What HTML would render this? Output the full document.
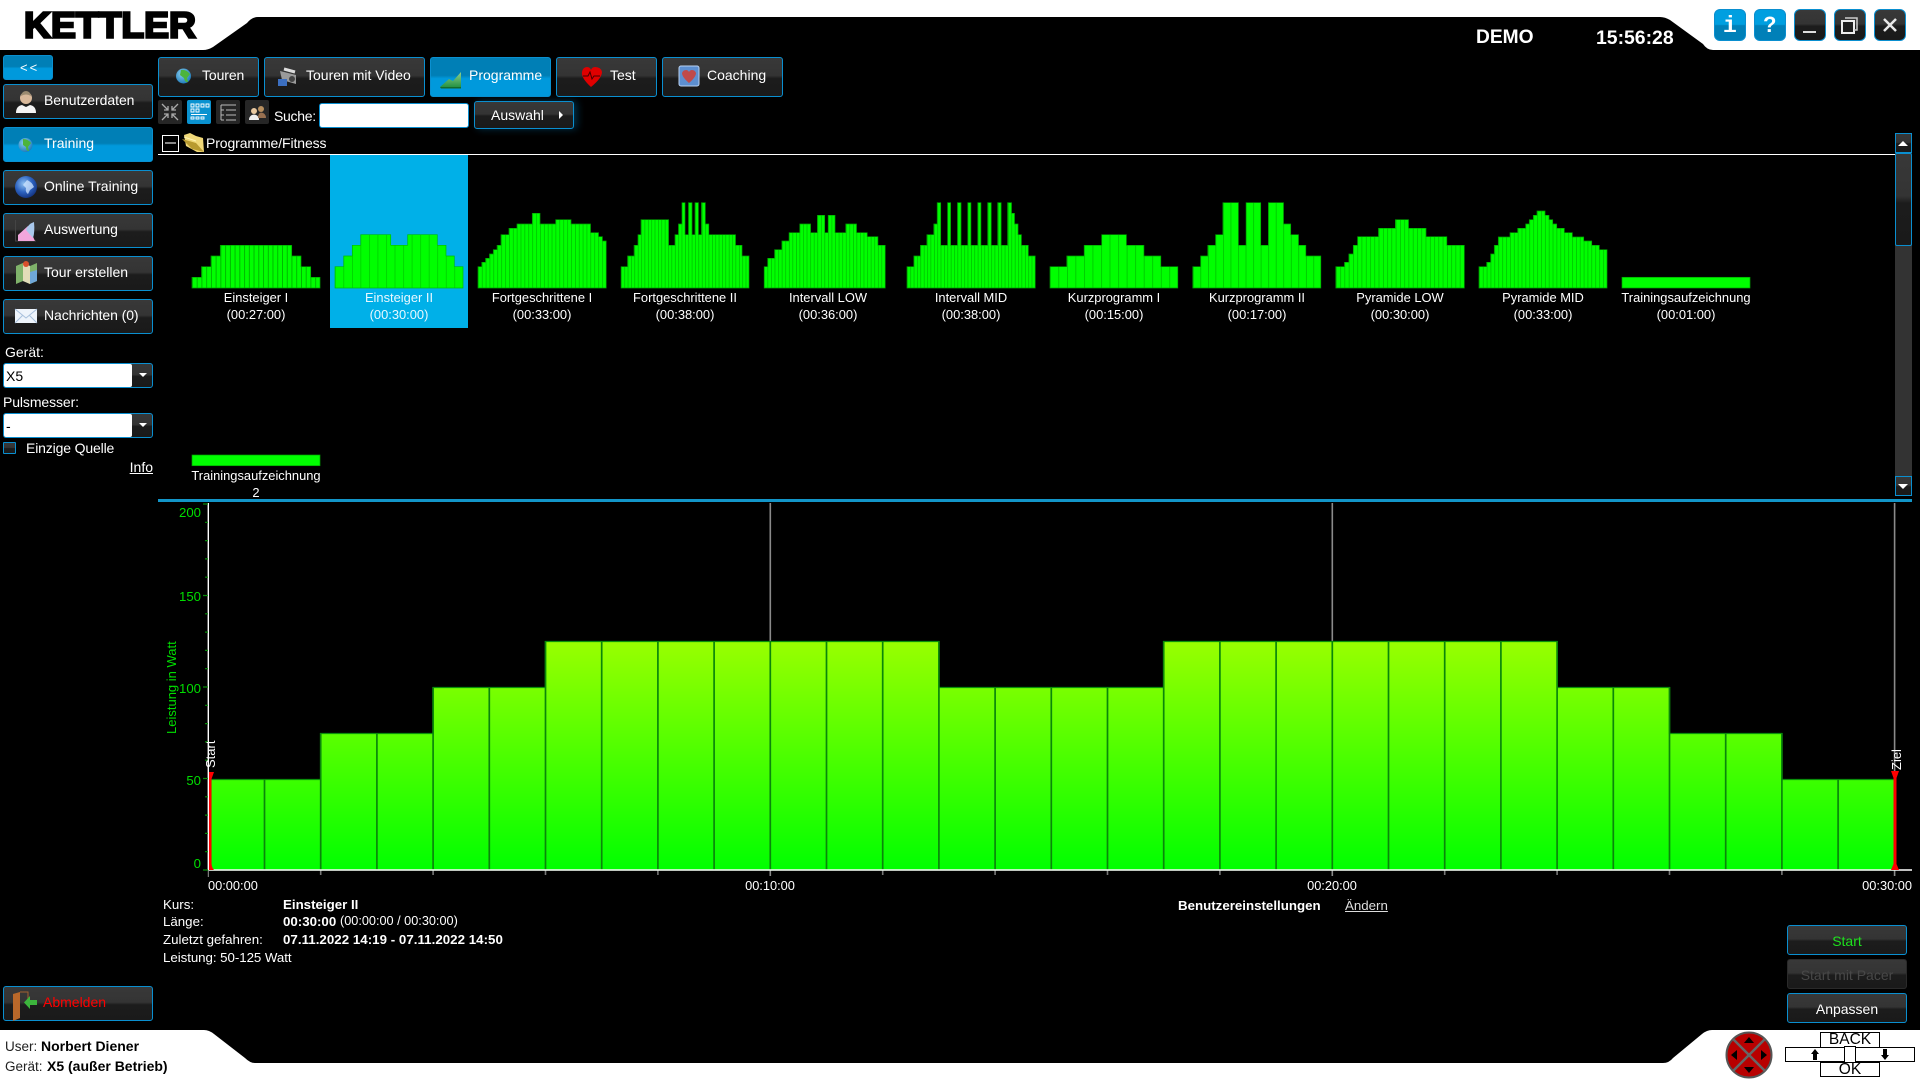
<!DOCTYPE html>
<html lang="de"><head><meta charset="utf-8"><title>Kettler</title>
<style>
html,body{margin:0;padding:0;width:1920px;height:1080px;overflow:hidden;background:#fff;font-family:"Liberation Sans",sans-serif;color:#fff}
svg.l{position:absolute;left:0;top:0;width:1920px;height:1080px}
svg text{font-family:"Liberation Sans",sans-serif}
.b{position:absolute;box-sizing:border-box;border:1px solid #0a8fd0;border-radius:3px;background:linear-gradient(#383838 0,#343434 46%,#1c1c1c 54%,#1a1a1a 100%)}
.a{background:linear-gradient(#007fb6 0,#007fb6 46%,#0099dc 54%,#0099dc 100%);border-color:#0a90d0}
.w{border-radius:6px}
.i{background:linear-gradient(#009fe0 0,#009fe0 48%,#0080b8 52%,#0080b8 100%)}
.t{position:absolute;white-space:nowrap;font-size:14px;line-height:17px}
.s{font-size:13.3px}
.k{color:#000}
.box{position:absolute;box-sizing:border-box;background:#fff;border:1.5px solid #000}
</style></head><body>
<svg class="l" viewBox="0 0 1920 1080">
<defs>
<linearGradient id="g" gradientUnits="userSpaceOnUse" x1="0" y1="870" x2="0" y2="641"><stop offset="0" stop-color="#00ff00"/><stop offset="1" stop-color="#99ff00"/></linearGradient>
<pattern id="p1" x="192" width="4.74" height="10" patternUnits="userSpaceOnUse"><rect width="5" height="10" fill="#0f0"/><rect width=".8" height="10" fill="#00a800"/></pattern>
<pattern id="p2" x="335" width="8.53" height="10" patternUnits="userSpaceOnUse"><rect width="9" height="10" fill="#0f0"/><rect width=".6" height="10" fill="#00c000"/></pattern>
<pattern id="p3" x="478" width="3.88" height="10" patternUnits="userSpaceOnUse"><rect width="4" height="10" fill="#0f0"/><rect width=".6" height="10" fill="#00b000"/></pattern>
<pattern id="p4" x="621" width="3.37" height="10" patternUnits="userSpaceOnUse"><rect width="4" height="10" fill="#0f0"/><rect width=".6" height="10" fill="#00b000"/></pattern>
<pattern id="p5" x="764" width="3.56" height="10" patternUnits="userSpaceOnUse"><rect width="4" height="10" fill="#0f0"/><rect width=".6" height="10" fill="#00b000"/></pattern>
<pattern id="p6" x="907" width="3.37" height="10" patternUnits="userSpaceOnUse"><rect width="4" height="10" fill="#0f0"/><rect width=".6" height="10" fill="#00b000"/></pattern>
<pattern id="p7" x="1050" width="8.53" height="10" patternUnits="userSpaceOnUse"><rect width="9" height="10" fill="#0f0"/><rect width=".6" height="10" fill="#00b000"/></pattern>
<pattern id="p8" x="1193" width="7.53" height="10" patternUnits="userSpaceOnUse"><rect width="8" height="10" fill="#0f0"/><rect width=".6" height="10" fill="#00b000"/></pattern>
<pattern id="p9" x="1336" width="4.27" height="10" patternUnits="userSpaceOnUse"><rect width="5" height="10" fill="#0f0"/><rect width=".6" height="10" fill="#00b000"/></pattern>
<pattern id="p10" x="1479" width="3.88" height="10" patternUnits="userSpaceOnUse"><rect width="4" height="10" fill="#0f0"/><rect width=".6" height="10" fill="#00b000"/></pattern>
<radialGradient id="gl" cx=".4" cy=".35" r=".7"><stop offset="0" stop-color="#8fc0f0"/><stop offset=".55" stop-color="#2c62c0"/><stop offset="1" stop-color="#12307c"/></radialGradient>
<radialGradient id="gs" cx=".4" cy=".35" r=".7"><stop offset="0" stop-color="#8cd0f0"/><stop offset="1" stop-color="#1a78b8"/></radialGradient>
<linearGradient id="gp" x1="0" y1="0" x2="0" y2="1"><stop offset="0" stop-color="#8fd08f"/><stop offset="1" stop-color="#1f8f3f"/></linearGradient>
</defs>
<path fill="#000" d="M0 50H203Q208 50 213 47L247 23Q252 17 258 17H1660Q1665 17 1670 20L1703 44Q1707 50 1713 50H1920V1030H1712Q1707 1030 1702 1034L1673 1058Q1669 1063 1663 1063H255Q250 1063 245 1058L214 1034Q209 1030 204 1030H0Z"/>
<!-- selected -->
<rect x="330" y="155" width="138" height="173" fill="#00b0e8"/>
<!-- tree line -->
<rect x="158" y="154" width="1737" height="1" fill="#fff"/>
<!-- thumbnails -->
<g stroke="#00a000" stroke-width=".7">
<path fill="url(#p1)" d="M192 288V277.3H201.5V266.7H211V256H220.3V245.3H291.7V256H301V266.7H310.7V277.3H320V288Z"/>
<path fill="url(#p2)" stroke="#00c000" d="M335 288V266.7H343.7V256H352.3V245.3H360.7V234.7H390.7V245.3H407.7V234.7H437.3V245.3H446V256H454.3V266.7H463V288Z"/>
<path fill="url(#p3)" d="M478 288V266.7H481.8V262.3H485.6V258.3H489.5V254H493.3V249.7H497.1V245.3H501V234.7H509V228.3H517V224H532.3V213.3H540V224H555.7V219.7H571V224H590.5V232.7H598.5V236.7H602.4V241H606.2V288Z"/>
<path fill="url(#p4)" d="M621.1 288V266.7H627.6V256H634.1V245.3H638V234.7H641V219.7H668.6V245.3H675V234.7H678.5V224H682V202.7H685V234.7H688.5V202.7H692V234.7H695V202.7H698.4V234.7H701.5V202.7H705.3V224H708.8V234.7H735.5V245.3H742V256H749V288Z"/>
<path fill="url(#p5)" d="M764.2 288V266.7H767.7V258.3H774.6V249.7H781.9V241H789.1V232.7H799.8V224H810.6V232.7H817.4V215.3H824.7V232.7H828.2V215.3H835V232.7H845.8V224H856.5V232.7H867.2V236.7H877.9V245.3H885.2V288Z"/>
<path fill="url(#p6)" d="M907 288V266.7H913.9V256H920.4V245.3H926.9V234.7H933.8V224H937.2V202.7H940.7V245.3H947.6V202.7H950.6V245.3H957.5V202.7H961V245.3H967.8V202.7H970.9V245.3H977.8V202.7H980.9V245.3H987.7V202.7H991.2V245.3H997.7V202.7H1001.1V245.3H1007.6V202.7H1011.5V213.3H1014.5V224H1018V234.7H1021.4V245.3H1028.3V256H1035.2V288Z"/>
<path fill="url(#p7)" d="M1050 288V266.7H1066.8V256H1084.2V245.3H1101.7V234.7H1126.4V245.3H1143.9V256H1160.8V266.7H1177.8V288Z"/>
<path fill="url(#p8)" d="M1192.8 288V266.7H1200.6V256H1207.8V245.3H1215.6V234.7H1222.9V202.7H1238.4V245.3H1246.1V202.7H1260.7V245.3H1268.4V202.7H1283.5V224H1290.7V234.7H1298.5V245.3H1305.8V256H1320.8V288Z"/>
<path fill="url(#p9)" d="M1335.8 288V266.7H1344.5V262.3H1348.9V254H1353.3V245.3H1357.6V236.7H1378.5V228.3H1395.4V219.7H1408.5V228.3H1426V236.7H1446.8V245.3H1464.3V288Z"/>
<path fill="url(#p10)" d="M1479 288V266.7H1486.7V262.3H1490.7V254H1494.3V245.3H1498.3V237H1510V232.7H1517.7V228.3H1525.7V224H1529.3V219.7H1533.3V215.3H1537V211H1545V215.3H1549V219.7H1552.7V224H1556.7V228.3H1564.3V232.7H1572.3V237H1583.7V241H1591.7V245.3H1599.3V249.7H1607V288Z"/>
<rect x="1622" y="277.3" width="128" height="10.7" fill="#0f0"/>
<rect x="192" y="455" width="128" height="10.7" fill="#0f0"/>
</g>
<!-- thumbnail labels -->
<g font-size="12.9" fill="#fff" text-anchor="middle">
<text x="256" y="302">Einsteiger I</text><text x="256" y="319">(00:27:00)</text>
<text x="399" y="302" fill="#e8f8ff">Einsteiger II</text><text x="399" y="319" fill="#e8f8ff">(00:30:00)</text>
<text x="542" y="302">Fortgeschrittene I</text><text x="542" y="319">(00:33:00)</text>
<text x="685" y="302">Fortgeschrittene II</text><text x="685" y="319">(00:38:00)</text>
<text x="828" y="302">Intervall LOW</text><text x="828" y="319">(00:36:00)</text>
<text x="971" y="302">Intervall MID</text><text x="971" y="319">(00:38:00)</text>
<text x="1114" y="302">Kurzprogramm I</text><text x="1114" y="319">(00:15:00)</text>
<text x="1257" y="302">Kurzprogramm II</text><text x="1257" y="319">(00:17:00)</text>
<text x="1400" y="302">Pyramide LOW</text><text x="1400" y="319">(00:30:00)</text>
<text x="1543" y="302">Pyramide MID</text><text x="1543" y="319">(00:33:00)</text>
<text x="1686" y="302">Trainingsaufzeichnung</text><text x="1686" y="319">(00:01:00)</text>
<text x="256" y="480">Trainingsaufzeichnung</text><text x="256" y="497">2</text>
</g>
<!-- separator -->
<rect x="158" y="499" width="1754" height="3" fill="#1295c8"/>
<!-- chart grid -->
<g stroke="#8a8a8a" stroke-width="1.6">
<path d="M770.3 503V876M1332.3 503V876M1894.6 503V876"/>
<path stroke="#777" d="M320.7 870V875M433.1 870V875M545.5 870V875M657.9 870V875M882.7 870V875M995.1 870V875M1107.5 870V875M1219.9 870V875M1444.7 870V875M1557.1 870V875M1669.5 870V875M1781.9 870V875"/>
</g>
<path fill="url(#g)" stroke="#0a8f0a" stroke-width="1.2" d="M211 870V779.500H320.7V733.500H433.1V687.500H545.5V641.500H938.9V687.500H1163.7V641.500H1557.1V687.500H1669.5V733.500H1781.9V779.500H1894.3V870Z"/>
<g stroke="#0a860a" stroke-width="1.7">
<path d="M264.5 779V870M320.7 733V870M376.9 733V870M433.1 687V870M489.3 687V870M545.5 641V870M601.7 641V870M657.9 641V870M714.1 641V870M770.3 641V870M826.5 641V870M882.7 641V870M938.9 641V870M995.1 687V870M1051.3 687V870M1107.5 687V870M1163.7 641V870M1219.9 641V870M1276.1 641V870M1332.3 641V870M1388.5 641V870M1444.7 641V870M1500.9 641V870M1557.1 641V870M1613.3 687V870M1669.5 687V870M1725.7 733V870M1781.9 733V870M1838.1 779V870"/>
</g>
<!-- axes -->
<path stroke="#fff" stroke-width="1.4" fill="none" d="M208.3 503V870M208 870H1912"/>
<path stroke="#999" stroke-width="1" d="M208.3 870V877"/>
<path stroke="#0a8a0a" stroke-width="1.2" d="M205 851.7H208M205 833.4H208M205 815.1H208M205 796.8H208M203 778.5H208M205 760.2H208M205 741.9H208M205 723.6H208M205 705.3H208M203 687H208M205 668.7H208M205 650.4H208M205 632.1H208M205 613.8H208M203 595.5H208M205 577.2H208M205 558.9H208M205 540.6H208M205 522.3H208M203 504H208M203 870H208"/>
<!-- red markers -->
<path fill="#f00" d="M209 772H214L211.5 779V864Q212 868 214 870H209Z"/>
<path fill="#f00" d="M1891 771H1899L1896.5 778V864L1899 870H1891L1893.5 864V778Z"/>
<g font-size="13" fill="#fff">
<text transform="translate(215 768) rotate(-90)">Start</text>
<text transform="translate(1901 770) rotate(-90)">Ziel</text>
</g>
<g font-size="13.2" fill="#0d0" text-anchor="end">
<text x="201" y="517">200</text><text x="201" y="601">150</text><text x="201" y="693">100</text><text x="201" y="785">50</text><text x="201" y="868">0</text>
</g>
<text transform="translate(176 734) rotate(-90)" font-size="13" fill="#0d0">Leistung in Watt</text>
<g font-size="12.8" fill="#fff">
<text x="208" y="890">00:00:00</text>
<text x="770" y="890" text-anchor="middle">00:10:00</text>
<text x="1332" y="890" text-anchor="middle">00:20:00</text>
<text x="1912" y="890" text-anchor="end">00:30:00</text>
</g>
<!-- logo -->
<text x="24" y="37.500" font-size="36.5" font-weight="700" fill="#000" stroke="#000" stroke-width="2.4" textLength="172" lengthAdjust="spacingAndGlyphs">KETTLER</text>
</svg>

<!-- sidebar -->
<div class="b a" style="left:3px;top:55px;width:50px;height:25px;border-radius:3px"></div>
<div class="b" style="left:3px;top:84px;width:150px;height:35px"></div>
<div class="b a" style="left:3px;top:127px;width:150px;height:35px"></div>
<div class="b" style="left:3px;top:170px;width:150px;height:35px"></div>
<div class="b" style="left:3px;top:213px;width:150px;height:35px"></div>
<div class="b" style="left:3px;top:256px;width:150px;height:35px"></div>
<div class="b" style="left:3px;top:299px;width:150px;height:35px"></div>
<div class="t" style="left:20px;top:59px;letter-spacing:2px;font-size:13px">&lt;&lt;</div>
<div class="t" style="left:44px;top:92px;letter-spacing:-.05px">Benutzerdaten</div>
<div class="t" style="left:44px;top:135px">Training</div>
<div class="t" style="left:44px;top:178px">Online Training</div>
<div class="t" style="left:44px;top:221px">Auswertung</div>
<div class="t" style="left:44px;top:264px">Tour erstellen</div>
<div class="t" style="left:44px;top:307px;letter-spacing:-.08px">Nachrichten (0)</div>

<div class="t" style="left:5px;top:344px">Gerät:</div>
<div class="b" style="left:3px;top:363px;width:150px;height:25px"></div>
<div style="position:absolute;left:4px;top:364px;width:128px;height:23px;background:#fff;border-radius:2px"></div>
<div class="t k" style="left:6px;top:368px">X5</div>
<div class="t" style="left:3px;top:394px;letter-spacing:-.1px">Pulsmesser:</div>
<div class="b" style="left:3px;top:413px;width:150px;height:25px"></div>
<div style="position:absolute;left:4px;top:414px;width:128px;height:23px;background:#fff;border-radius:2px"></div>
<div class="t k" style="left:6px;top:418px">-</div>
<div class="b" style="left:3px;top:442px;width:13px;height:12px;border-radius:1px"></div>
<div class="t" style="left:26px;top:440px;letter-spacing:-.15px">Einzige Quelle</div>
<div class="t" style="right:1767px;top:459px;text-decoration:underline">Info</div>

<div class="b" style="left:3px;top:986px;width:150px;height:35px"></div>
<div class="t" style="left:43px;top:994px;color:#f00">Abmelden</div>

<!-- tabs -->
<div class="b" style="left:158px;top:57px;width:101px;height:40px"></div>
<div class="b" style="left:264px;top:57px;width:161px;height:40px"></div>
<div class="b a" style="left:430px;top:57px;width:121px;height:40px"></div>
<div class="b" style="left:556px;top:57px;width:101px;height:40px"></div>
<div class="b" style="left:662px;top:57px;width:121px;height:40px"></div>
<div class="t" style="left:202px;top:67px;letter-spacing:-.1px">Touren</div>
<div class="t" style="left:306px;top:67px">Touren mit Video</div>
<div class="t" style="left:469px;top:67px">Programme</div>
<div class="t" style="left:610px;top:67px">Test</div>
<div class="t" style="left:707px;top:67px">Coaching</div>

<!-- toolbar -->
<div style="position:absolute;left:158px;top:100px;width:24px;height:24px;background:#262626;border-radius:2px"></div>
<div style="position:absolute;left:187px;top:100px;width:24px;height:24px;background:#0a92d0;border-radius:2px"></div>
<div style="position:absolute;left:216px;top:100px;width:24px;height:24px;background:#262626;border-radius:2px"></div>
<div style="position:absolute;left:245px;top:100px;width:24px;height:24px;background:#262626;border-radius:2px"></div>
<div class="t" style="left:274px;top:108px;letter-spacing:-.3px">Suche:</div>
<div style="position:absolute;left:319px;top:103px;width:150px;height:25px;background:#fff;border:1px solid #0a8fd0;box-sizing:border-box;border-radius:3px"></div>
<div class="b" style="left:474px;top:101px;width:100px;height:28px;box-shadow:3px 0 8px rgba(0,140,210,.35)"></div>
<div class="t" style="left:491px;top:107px">Auswahl</div>
<div style="position:absolute;left:559px;top:111px;width:0;height:0;border-left:4px solid #fff;border-top:4px solid transparent;border-bottom:4px solid transparent"></div>

<!-- tree -->
<div style="position:absolute;left:162px;top:135px;width:17px;height:17px;box-sizing:border-box;border:1px solid #fff;background:#000"></div>
<div style="position:absolute;left:165px;top:142px;width:11px;height:2px;background:#888"></div>
<div class="t" style="left:206px;top:135px;letter-spacing:-.1px">Programme/Fitness</div>

<!-- scrollbar -->
<div style="position:absolute;left:1895px;top:153px;width:17px;height:323px;background:#333"></div>
<div class="b" style="left:1895px;top:133px;width:17px;height:20px;border-radius:0"></div>
<div class="b" style="left:1895px;top:153px;width:17px;height:93px;border-radius:2px"></div>
<div class="b" style="left:1895px;top:476px;width:17px;height:20px;border-radius:0"></div>
<div style="position:absolute;left:1898px;top:141px;width:0;height:0;border-bottom:5px solid #fff;border-left:5px solid transparent;border-right:5px solid transparent"></div>
<div style="position:absolute;left:1898px;top:484px;width:0;height:0;border-top:5px solid #fff;border-left:5px solid transparent;border-right:5px solid transparent"></div>
<div style="position:absolute;left:139px;top:373px;width:0;height:0;border-top:4px solid #fff;border-left:4px solid transparent;border-right:4px solid transparent"></div>
<div style="position:absolute;left:139px;top:423px;width:0;height:0;border-top:4px solid #fff;border-left:4px solid transparent;border-right:4px solid transparent"></div>

<!-- window buttons -->
<div class="b w i" style="left:1714px;top:9px;width:32px;height:32px"></div>
<div class="b w i" style="left:1754px;top:9px;width:32px;height:32px"></div>
<div class="b w" style="left:1794px;top:9px;width:32px;height:32px"></div>
<div class="b w" style="left:1834px;top:9px;width:32px;height:32px"></div>
<div class="b w" style="left:1874px;top:9px;width:32px;height:32px"></div>
<div class="t" style="left:1723px;top:13px;font:700 23px/26px 'Liberation Mono',monospace">i</div>
<div class="t" style="left:1763px;top:12px;font:700 22px/26px 'Liberation Sans',sans-serif">?</div>

<div class="t" style="left:1476px;top:27px;font-size:19.2px;line-height:22px;font-weight:700">DEMO</div>
<div class="t" style="left:1596px;top:27px;font-size:19.4px;line-height:22px;font-weight:700">15:56:28</div>

<!-- info -->
<div class="t s" style="left:163px;top:896px">Kurs:</div>
<div class="t s" style="left:283px;top:896px;font-weight:700">Einsteiger II</div>
<div class="t s" style="left:163px;top:913px">Länge:</div>
<div class="t s" style="left:283px;top:913px;font-weight:700">00:30:00</div>
<div class="t" style="left:340px;top:913px;font-size:12.7px">(00:00:00 / 00:30:00)</div>
<div class="t s" style="left:163px;top:931px">Zuletzt gefahren:</div>
<div class="t s" style="left:283px;top:931px;font-weight:700;letter-spacing:.03px">07.11.2022 14:19 - 07.11.2022 14:50</div>
<div class="t s" style="left:163px;top:949px;letter-spacing:-.05px">Leistung: 50-125 Watt</div>
<div class="t s" style="left:1178px;top:897px;font-weight:700">Benutzereinstellungen</div>
<div class="t s" style="left:1345px;top:897px;text-decoration:underline;color:#ddd">Ändern</div>

<!-- right buttons -->
<div class="b" style="left:1787px;top:925px;width:120px;height:30px"></div>
<div class="b" style="left:1787px;top:959px;width:120px;height:30px;border-color:#2a2a2a"></div>
<div class="b" style="left:1787px;top:993px;width:120px;height:30px"></div>
<div class="t" style="left:1787px;width:120px;text-align:center;top:933px;color:#1ee01e">Start</div>
<div class="t" style="left:1787px;width:120px;text-align:center;top:967px;color:#484848">Start mit Pacer</div>
<div class="t" style="left:1787px;width:120px;text-align:center;top:1001px">Anpassen</div>

<!-- footer -->
<div class="t k" style="left:5px;top:1038px;font-size:13.5px;color:#222">User:</div>
<div class="t k" style="left:41px;top:1038px;font-weight:700">Norbert Diener</div>
<div class="t k" style="left:5px;top:1058px;font-size:13.5px;color:#222">Gerät:</div>
<div class="t k" style="left:47px;top:1058px;font-weight:700">X5 (außer Betrieb)</div>

<div class="box" style="left:1820px;top:1032px;width:60px;height:16px"></div>
<div class="box" style="left:1820px;top:1062px;width:60px;height:15px"></div>
<div class="box" style="left:1785px;top:1047px;width:60px;height:15px"></div>
<div class="box" style="left:1855px;top:1047px;width:60px;height:15px"></div>
<div class="box" style="left:1844px;top:1046px;width:12px;height:17px;border-width:1px"></div>
<div class="t k" style="left:1820px;width:60px;text-align:center;top:1031px;font-size:15.5px">BACK</div>
<div class="t k" style="left:1820px;width:60px;text-align:center;top:1061px;font-size:15.5px">OK</div>

<!-- icons overlay -->
<svg class="l" viewBox="0 0 1920 1080">
<!-- person -->
<circle cx="26" cy="98" r="6" fill="#d8b89a"/><path d="M21 96Q22 91 26 91Q30 91 31 96Q26 93 21 96Z" fill="#9a8a70"/>
<path d="M16 113Q16 106 22 105L26 107L30 105Q36 106 36 113Z" fill="#f4f4f4"/>
<!-- small globes -->
<circle cx="25.5" cy="145" r="7" fill="url(#gs)"/><path d="M23 139Q28 139 31 143L28 147L29 151Q26 151 26 147L23 145Z" fill="#4cb43c"/>
<circle cx="183.500" cy="76" r="7.5" fill="url(#gs)"/><path d="M181 70Q186 69 190 74L187 78L188 82Q185 83 184 78L180 75Z" fill="#4cb43c"/>
<!-- online globe -->
<circle cx="26" cy="187" r="11" fill="url(#gl)"/><path d="M27 180Q32 182 34 187L30 190L28 194Q25 192 26 188L23 185Z" fill="#d0e6ff" opacity=".75"/>
<!-- chart -->
<path d="M15.5 220V241H36" stroke="#444" fill="none"/><path d="M18 241V235L28 226L35 241Z" fill="#f2a6dc"/><path d="M26 230Q28 224 34 222Q35 232 33 238Z" fill="#a9c8ec"/>
<!-- map -->
<path d="M16 266L23 263L30 266L37 263V281L30 284L23 281L16 284Z" fill="#7fb26a"/><path d="M23 263L30 266V284L23 281Z" fill="#e2dcb8"/><path d="M30 272L37 270V281L30 284Z" fill="#6fa7d8"/><circle cx="26" cy="264" r="3" fill="#d8502c"/>
<!-- envelope -->
<rect x="15" y="309" width="22" height="14" fill="#eef4fb"/><path d="M15 309L26 318L37 309M15 323L23 315M37 323L29 315" stroke="#a8c0dc" fill="none"/>
<!-- camera -->
<path d="M280 71L296 75V84L282 80Z" fill="#9a9a9a"/><path d="M284 69L295 72" stroke="#ddd" stroke-width="3"/><rect x="278" y="79" width="9" height="7" fill="#3c6fc0"/><circle cx="292" cy="79" r="3" fill="#444"/>
<!-- programme -->
<path d="M440 87L449 79L453 81L461 72V88H441Z" fill="url(#gp)"/><path d="M440 87L441 88.500H461V87Z" fill="#136b2b"/>
<!-- heart -->
<path d="M591 87Q581 78 582 72Q583 67 587 67Q590 67 591 70Q592 67 595 67Q601 67 602 72Q602 78 591 87Z" fill="#e00000"/><path d="M583 76H588L590 72L592 79L594 76H600" stroke="#400" fill="none"/>
<!-- coaching -->
<rect x="679" y="66" width="20" height="20" rx="2" fill="#5d8fd0" stroke="#b8d0f0"/><path d="M689 83Q682 77 682 73Q683 70 686 70Q688 70 689 72Q690 70 692 70Q695 70 696 73Q696 77 689 83Z" fill="#c04a4a"/>
<!-- door -->
<path d="M13 994L20 992V1018L13 1021Z" fill="#b9682a"/><path d="M20 992H28V1000" stroke="#a06030" fill="none"/><path d="M37 1000H30V996L24 1002.5L30 1009V1005H37Z" fill="#3cb43c"/>
<!-- toolbar icons -->
<g stroke="#aaa" stroke-width="1.3" fill="none"><path d="M162 104L168 110M168 106V110H164M178 104L172 110M172 106V110H176M162 120L168 114M168 118V114H164M178 120L172 114M172 118V114H176"/></g>
<g fill="none" stroke="#fff" stroke-width=".9"><path d="M191 104h3v3h-3zM196 104h3v3h-3zM201 104h3v3h-3zM206 104h3v3h-3zM191 109h3v3h-3zM196 109h3v3h-3zM191 117h3v2h-3zM196 117h3v2h-3zM201 117h3v2h-3zM191 114.500H207"/></g>
<g fill="none" stroke="#bbb" stroke-width="1"><path d="M221 105H236M221 105V120M221 110H224M221 115H224M221 120H224M226 110H236M226 115H236M226 120H236"/></g>
<circle cx="254" cy="111" r="3" fill="#e8c8a0"/><path d="M249 120Q249 115 254 114.500Q259 115 259 120Z" fill="#eee"/><circle cx="261" cy="109" r="3" fill="#b89060"/><path d="M258 118Q258 113 261 112.500Q266 113 266 118Z" fill="#987050"/>
<!-- folder -->
<path d="M184 135L190 133L196 136L203 138L204 152H197L186 146Z" fill="#f0d878"/><path d="M182 139L196 143L204 152L192 149Z" fill="#b89a30"/><path d="M184 137L196 141" stroke="#fff2b0" fill="none"/>
<!-- window glyphs -->
<path d="M1803 32H1816" stroke="#ddd" stroke-width="2"/>
<rect x="1842" y="21" width="12" height="12" stroke="#eee" stroke-width="2" fill="#1f1f1f"/><path d="M1845 18H1857V30H1854" stroke="#ccc" stroke-width="1.5" fill="none"/>
<path d="M1884 19L1896 31M1896 19L1884 31" stroke="#e8e8e8" stroke-width="2.500"/>
<!-- joystick -->
<circle cx="1749" cy="1055" r="22.500" fill="#b80000" stroke="#555" stroke-width="2"/>
<path d="M1733 1039L1765 1071M1765 1039L1733 1071" stroke="#666" stroke-width="2.500"/>
<path fill="#000" d="M1749 1037L1754 1043H1744ZM1749 1073L1744 1067H1754ZM1731 1055L1737 1050V1060ZM1767 1055L1761 1050V1060Z"/>
<!-- arrows -->
<path fill="#000" d="M1815 1049L1819 1054H1817V1060H1813V1054H1811ZM1885 1060L1881 1055H1883V1049H1887V1055H1889Z"/>
</svg>
</body></html>
